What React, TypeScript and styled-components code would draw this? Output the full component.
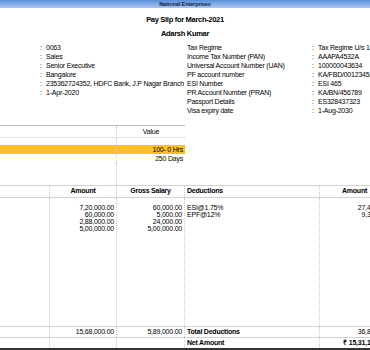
import styled, { createGlobalStyle } from "styled-components";

const GlobalStyle = createGlobalStyle`
  html, body {
    margin: 0;
    padding: 0;
    background: #fff;
  }
  body {
    font-family: "Liberation Sans", Arial, sans-serif;
    color: #000;
  }
`;

const Screen = styled.div`
  width: 370px;
  height: 350px;
  display: flex;
  flex-direction: column;
  overflow: hidden;
  font-size: 7px;
  letter-spacing: -0.22px;
  background: #fff;
`;

const TitleBar = styled.div`
  flex: none;
  height: 8px;
  display: flex;
  align-items: center;
  justify-content: center;
  background: linear-gradient(#5b8fda, #a8c7ef);
  color: #0f1d45;
  font-size: 5.5px;
  font-weight: bold;
  letter-spacing: -0.1px;
`;

const Heading = styled.div<{ $gap: number }>`
  flex: none;
  margin-top: ${(p) => p.$gap}px;
  line-height: 9px;
  text-align: center;
  font-weight: bold;
  font-size: 7.5px;
  letter-spacing: -0.3px;
`;

const Details = styled.div`
  flex: none;
  margin-top: 5px;
  display: grid;
  grid-template-columns: 185px 185px;
`;

const DetailList = styled.div<{ $label: number }>`
  display: grid;
  grid-template-columns: ${(p) => p.$label}px 6px 1fr;
  grid-auto-rows: 9px;
  align-content: start;
  padding-left: ${(p) => (p.$label > 50 ? 2 : 0)}px;
  line-height: 9px;
  white-space: nowrap;
  overflow: hidden;
`;

const Attendance = styled.div`
  flex: none;
  margin-top: 10px;
  width: 185px;
  height: 59px;
  display: grid;
  grid-template-columns: 117px 68px;
  grid-template-rows: 12px 7px 9px 9px 1fr;
  border-top: 1px solid #bdbdbd;
`;

const ACell = styled.div<{ $head?: boolean; $hl?: boolean; $divide?: boolean; $align?: string }>`
  text-align: ${(p) => p.$align ?? "right"};
  line-height: ${(p) => (p.$head ? "11px" : "9px")};
  padding: 0 2px;
  white-space: nowrap;
  background: ${(p) => (p.$hl ? "#fbbf2e" : "transparent")};
  border-right: ${(p) => (p.$divide ? "1px dotted #cacaca" : "none")};
  border-bottom: ${(p) => (p.$head ? "1px dotted #d4d4d4" : "none")};
`;

const Table = styled.div`
  flex: 1;
  display: flex;
  flex-direction: column;
  width: 390px;
  min-height: 0;
`;

const Row = styled.div<{ $height?: number; $grow?: boolean; $top?: string; $bottom?: string; $bold?: boolean }>`
  display: grid;
  grid-template-columns: 50px 67px 68px 135px 70px;
  flex: ${(p) => (p.$grow ? 1 : "none")};
  height: ${(p) => (p.$height ? `${p.$height}px` : "auto")};
  border-top: ${(p) => p.$top ?? "none"};
  border-bottom: ${(p) => p.$bottom ?? "none"};
  font-weight: ${(p) => (p.$bold ? "bold" : "normal")};
`;

const Col = styled.div<{ $align?: string; $bold?: boolean; $pad?: number; $line?: number }>`
  border-right: 1px dotted #c9c9c9;
  padding: ${(p) => p.$pad ?? 0}px 2px 0;
  text-align: ${(p) => p.$align ?? "right"};
  font-weight: ${(p) => (p.$bold ? "bold" : "inherit")};
  line-height: ${(p) => p.$line ?? 9}px;
  white-space: nowrap;
  overflow: hidden;
`;

const BottomEdge = styled.div`
  flex: none;
  height: 2px;
  margin-top: 1px;
  background: #333;
`;

const leftDetails = [
  "0063",
  "Sales",
  "Senior Executive",
  "Bangalore",
  "235362724352, HDFC Bank, J.P Nagar Branch",
  "1-Apr-2020",
];

const rightDetails = [
  ["Tax Regime", "Tax Regime U/s 115BAC"],
  ["Income Tax Number (PAN)", "AAAPA4532A"],
  ["Universal Account Number (UAN)", "100000043634"],
  ["PF account number", "KA/FBD/0012345/000/0001"],
  ["ESI Number", "ESI 465"],
  ["PR Account Number (PRAN)", "KA/BN/456789"],
  ["Passport Details", "ES328437323"],
  ["Visa expiry date", "1-Aug-2030"],
];

const earnings = [
  ["7,20,000.00", "60,000.00"],
  ["60,000.00", "5,000.00"],
  ["2,88,000.00", "24,000.00"],
  ["5,00,000.00", "5,00,000.00"],
];

const deductions = [
  ["ESI@1.75%", "27,440.00"],
  ["EPF@12%", "9,360.00"],
];

const line = "1px solid #d2d2d2";

export default function App() {
  return (
    <>
      <GlobalStyle />
      <Screen>
        <TitleBar>National Enterprises</TitleBar>
        <Heading $gap={7}>Pay Slip for March-2021</Heading>
        <Heading $gap={5}>Adarsh Kumar</Heading>

        <Details>
          <DetailList $label={40}>
            {leftDetails.map((v) => (
              <>
                <span />
                <span>:</span>
                <span>{v}</span>
              </>
            ))}
          </DetailList>
          <DetailList $label={125}>
            {rightDetails.map(([k, v]) => (
              <>
                <span>{k}</span>
                <span>:</span>
                <span>{v}</span>
              </>
            ))}
          </DetailList>
        </Details>

        <Attendance>
          <ACell $head $divide />
          <ACell $head $align="center">Value</ACell>
          <ACell $divide />
          <ACell />
          <ACell $hl $divide />
          <ACell $hl>100- 0 Hrs</ACell>
          <ACell $divide />
          <ACell>250 Days</ACell>
          <ACell $divide />
          <ACell />
        </Attendance>

        <Table>
          <Row $height={11} $top={line} $bottom={line} $bold>
            <Col />
            <Col $align="center">Amount</Col>
            <Col $align="center">Gross Salary</Col>
            <Col $align="left">Deductions</Col>
            <Col $align="center">Amount</Col>
          </Row>
          <Row $grow>
            <Col />
            <Col $pad={6} $line={7}>
              {earnings.map(([a]) => (
                <div key={a}>{a}</div>
              ))}
            </Col>
            <Col $pad={6} $line={7}>
              {earnings.map(([a, g]) => (
                <div key={a}>{g}</div>
              ))}
            </Col>
            <Col $pad={6} $line={7} $align="left">
              {deductions.map(([d]) => (
                <div key={d}>{d}</div>
              ))}
            </Col>
            <Col $pad={6} $line={7}>
              {deductions.map(([d, a]) => (
                <div key={d}>{a}</div>
              ))}
            </Col>
          </Row>
          <Row $height={10} $top={line} $bottom={line}>
            <Col />
            <Col>15,68,000.00</Col>
            <Col>5,89,000.00</Col>
            <Col $align="left" $bold>Total Deductions</Col>
            <Col>36,840.00</Col>
          </Row>
          <Row $height={9} $bold>
            <Col />
            <Col />
            <Col />
            <Col $align="left">Net Amount</Col>
            <Col>₹ 15,31,160.00</Col>
          </Row>
        </Table>
        <BottomEdge />
      </Screen>
    </>
  );
}
